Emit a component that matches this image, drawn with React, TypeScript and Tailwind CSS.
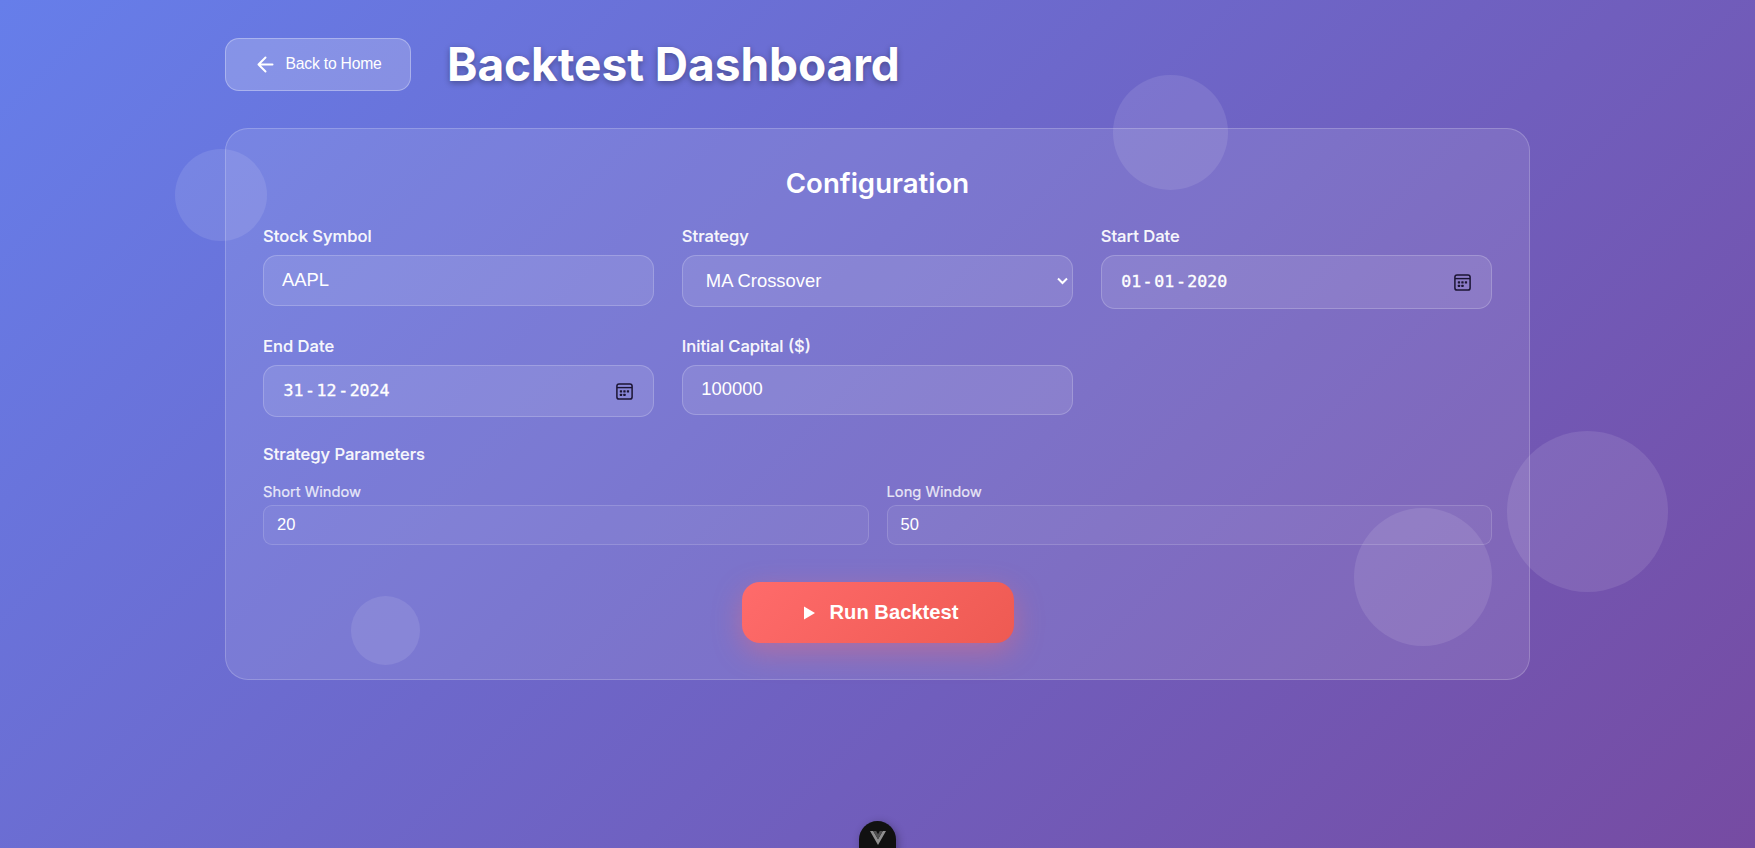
import React from "react";

const field =
  "w-full rounded-[14px] border border-white/20 bg-white/10 font-['Liberation_Sans',sans-serif] text-[18.4px] text-white outline-none";

const label = "text-[16.56px] font-medium leading-[21px] text-white/95 [-webkit-text-stroke:0.2px_rgba(255,255,255,0.9)]";

function Bubble({ className }: { className: string }) {
  return <div className={`pointer-events-none absolute rounded-full bg-white/10 ${className}`} />;
}

function CalendarIcon() {
  return (
    <svg width="17" height="17" viewBox="0 0 17 17" fill="none" className="shrink-0">
      <rect x="0.9" y="0.9" width="15.2" height="15.2" rx="2.2" stroke="#1b1433" strokeWidth="1.5" />
      <path d="M1 4.6H16" stroke="#1b1433" strokeWidth="1.4" />
      <g fill="#1b1433">
        <rect x="3.8" y="7.2" width="2.3" height="2.3" rx="0.5" />
        <rect x="7.3" y="7.2" width="2.3" height="2.3" rx="0.5" />
        <rect x="10.8" y="7.2" width="2.3" height="2.3" rx="0.5" />
        <rect x="3.8" y="10.8" width="2.3" height="2.3" rx="0.5" />
        <rect x="7.3" y="10.8" width="2.3" height="2.3" rx="0.5" />
      </g>
    </svg>
  );
}

function DateField({ title, parts, height }: { title: string; parts: string[]; height: string }) {
  return (
    <div className="flex flex-col gap-[8px]">
      <span className={label}>{title}</span>
      <div className={`${field} ${height} flex items-center justify-between pl-[19.5px] pr-[20.5px]`}>
        <span className="flex font-['DejaVu_Sans_Mono',monospace] text-[16.6px] leading-none [-webkit-text-stroke:0.35px_white]">
          <span className="pr-[1.4px]">{parts[0]}</span>-<span className="px-[1.7px]">{parts[1]}</span>-
          <span className="pl-[1.4px]">{parts[2]}</span>
        </span>
        <CalendarIcon />
      </div>
    </div>
  );
}

export default function App() {
  return (
    <div className="relative h-[848px] w-full overflow-hidden bg-[linear-gradient(135deg,#667eea_0%,#764ba2_100%)] font-['Inter',sans-serif] text-white">
      <div className="mx-auto w-[1305px] pt-[38px]">
        <header className="flex h-[53px] items-center gap-[36px]">
          <button className="flex h-[53px] w-[186px] items-center rounded-[14px] border border-white/30 bg-white/20 pb-[1px] pl-[30.5px] font-['Liberation_Sans',sans-serif] text-[15.7px] tracking-[-0.2px]">
            <svg width="17" height="17" viewBox="0 0 17 17" fill="none" stroke="white" strokeWidth="2" strokeLinecap="round" strokeLinejoin="round" className="mr-3 mt-[1px] shrink-0">
              <path d="M15.5 8.5H1.5M8.5 1.5L1.5 8.5L8.5 15.5" />
            </svg>
            <span className="whitespace-nowrap">Back to Home</span>
          </button>
          <h1 className="whitespace-nowrap text-[46px] font-bold leading-[53px] tracking-[-0.04px] [text-shadow:0_2px_6px_rgba(0,0,0,0.33)]">
            Backtest Dashboard
          </h1>
        </header>

        <main className="mt-[37px] h-[552px] rounded-[23px] border border-white/20 bg-white/10 px-[37px] pt-[36px]">
          <h2 className="text-center text-[27.6px] font-semibold leading-[36px]">Configuration</h2>
          <div className="mt-[25px] grid grid-cols-3 gap-x-[27.6px]">
            <label className="flex h-[110px] flex-col gap-[8px]">
              <span className={label}>Stock Symbol</span>
              <input className={`${field} h-[51px] px-[18px] pb-[2px]`} defaultValue="AAPL" />
            </label>
            <div className="flex h-[110px] flex-col gap-[8px]">
              <span className={label}>Strategy</span>
              <div className={`${field} flex h-[52px] items-center justify-between pl-[23px] pr-[4px]`}>
                <span>MA Crossover</span>
                <svg width="11" height="8" viewBox="0 0 11 8" fill="none" stroke="white" strokeWidth="2">
                  <path d="M1 1.5L5.5 6L10 1.5" />
                </svg>
              </div>
            </div>
            <DateField title="Start Date" parts={["01", "01", "2020"]} height="h-[54px]" />
            <DateField title="End Date" parts={["31", "12", "2024"]} height="h-[52px]" />
            <label className="flex h-[108px] flex-col gap-[8px]">
              <span className={label}>Initial Capital ($)</span>
              <input className={`${field} h-[50px] px-[18.5px] pb-[2px]`} defaultValue="100000" />
            </label>
          </div>

          <h3 className={label}>Strategy Parameters</h3>
          <div className="mt-[18px] grid grid-cols-2 gap-x-[18px]">
            {[
              ["Short Window", "20"],
              ["Long Window", "50"],
            ].map(([name, value]) => (
              <label key={name} className="flex flex-col gap-[4px]">
                <span className="text-[14.72px] leading-[18px] text-white/80 [-webkit-text-stroke:0.2px_rgba(255,255,255,0.8)]">{name}</span>
                <input
                  className="h-[40px] w-full rounded-[9px] border border-white/15 bg-white/5 px-[13px] pb-[2px] font-['Liberation_Sans',sans-serif] text-[16.5px] text-white outline-none"
                  defaultValue={value}
                />
              </label>
            ))}
          </div>

          <button className="mx-auto mt-[37px] flex h-[61px] w-[272px] items-center rounded-[18px] bg-[linear-gradient(135deg,#ff6b6b,#ee5a52)] pb-[1px] pl-[62px] font-['Liberation_Sans',sans-serif] text-[20.2px] font-bold shadow-[0_9px_29px_rgba(255,107,107,0.4)]">
            <svg width="11" height="14" viewBox="0 0 11 14" fill="white" className="mr-[15px] mt-[1px] shrink-0">
              <path d="M0 0.5L11 7L0 13.5Z" />
            </svg>
            <span className="whitespace-nowrap">Run Backtest</span>
          </button>
        </main>
      </div>

      <Bubble className="left-[175px] top-[149px] size-[92px]" />
      <Bubble className="left-[1113px] top-[75px] size-[115px]" />
      <Bubble className="left-[1507px] top-[431px] size-[161px]" />
      <Bubble className="left-[1354px] top-[508px] size-[138px]" />
      <Bubble className="left-[351px] top-[596px] size-[69px]" />

      <div className="absolute left-[859px] top-[821px] flex h-[60px] w-[37px] justify-center rounded-full bg-[#111] pt-[10px] shadow-[2px_2px_8px_rgba(0,0,0,0.3)]">
        <svg width="16" height="14" viewBox="0 0 16 14">
          <path d="M0 0H3.2L8 8.3L12.8 0H16L8 14Z" fill="#8f8f8f" />
          <path d="M3.2 0H6.2L8 3.2L9.8 0H12.8L8 8.3Z" fill="#505050" />
        </svg>
      </div>
    </div>
  );
}
